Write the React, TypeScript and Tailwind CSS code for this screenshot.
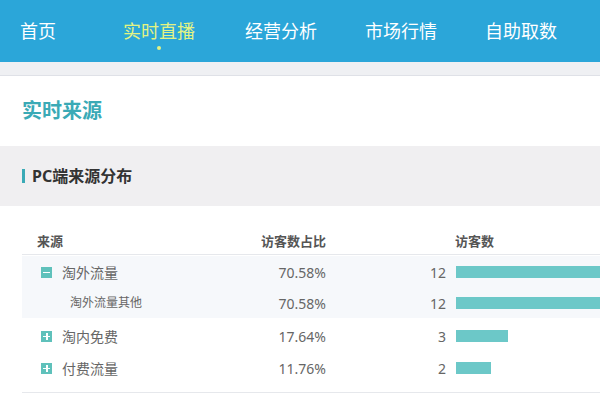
const navItems = ['首页', '实时直播', '经营分析', '市场行情', '自助取数']

type Row = { name: string; pct: string; count: number; level: 0 | 1; icon?: 'minus' | 'plus' }

const groups: Row[][] = [
  [
    { name: '淘外流量', pct: '70.58%', count: 12, level: 0, icon: 'minus' },
    { name: '淘外流量其他', pct: '70.58%', count: 12, level: 1 },
  ],
  [{ name: '淘内免费', pct: '17.64%', count: 3, level: 0, icon: 'plus' }],
  [{ name: '付费流量', pct: '11.76%', count: 2, level: 0, icon: 'plus' }],
]

function ToggleIcon({ kind }: { kind: 'minus' | 'plus' }) {
  return (
    <span className="relative w-[11px] h-[11px] bg-[#5fc1bb] shrink-0">
      <span className="absolute left-[2px] right-[2px] top-[5px] h-[1.5px] bg-white" />
      {kind === 'plus' && <span className="absolute top-[2px] bottom-[2px] left-[5px] w-[1.5px] bg-white" />}
    </span>
  )
}

function TableRow({ row }: { row: Row }) {
  const sub = row.level === 1
  return (
    <div className={`grid grid-cols-[234px_70px_120px_1fr] items-center ${sub ? 'h-[30px]' : 'h-[32px]'}`}>
      <div className="flex items-center gap-[10px] pl-[19px]">
        {row.icon ? <ToggleIcon kind={row.icon} /> : null}
        <span className={sub ? 'pl-[29px] text-[12px] text-[#666]' : 'text-[14px] text-[#666]'}>{row.name}</span>
      </div>
      <div className="text-right text-[14px] text-[#666]">{row.pct}</div>
      <div className="text-right text-[14px] text-[#666]">{row.count}</div>
      <div className="pl-[10px] flex items-center">
        <div className="h-[12px] bg-[#6cc8c8]" style={{ width: row.count * 17.4 }} />
      </div>
    </div>
  )
}

export default function App() {
  return (
    <div className="w-[600px] h-[400px] overflow-hidden bg-white font-['Noto_Sans','Noto_Sans_CJK_SC',sans-serif]">
      <nav className="h-[62px] bg-[#2ba6d9] flex items-center pl-[20px] gap-[48px]">
        {navItems.map((item, i) => (
          <div
            key={item}
            className={`relative text-[18px] ${i === 0 ? 'mr-[19px]' : ''} ${i === 1 ? 'mr-[2px] text-[#e3f383]' : 'text-white'}`}
          >
            {item}
            {i === 1 && <span className="absolute left-1/2 -translate-x-1/2 top-[28px] w-[4px] h-[4px] rounded-full bg-[#e3f383]" />}
          </div>
        ))}
      </nav>
      <div className="h-[14px] bg-[#eff0f3] border-b border-[#dfe1e7]" />

      <section className="h-[70px] flex items-center pl-[22px]">
        <h1 className="text-[20px] font-bold text-[#3aaab6]">实时来源</h1>
      </section>

      <section className="h-[60px] bg-[#f0eff1] flex items-center pl-[22px] gap-[7px]">
        <span className="w-[3px] h-[14px] bg-[#3aaab6]" />
        <h2 className="text-[16px] font-bold text-[#333]">PC端来源分布</h2>
      </section>

      <div className="ml-[22px] pt-[23px] w-[700px]">
        <div className="grid grid-cols-[234px_70px_120px_1fr] h-[26px] items-center border-b border-[#e6e8ec] text-[13px] font-semibold text-[#555]">
          <div className="pl-[15px]">来源</div>
          <div className="text-right">访客数占比</div>
          <div />
          <div className="pl-[9px]">访客数</div>
        </div>
        <div className="flex flex-col pt-[1px] pb-[8px] border-b border-[#e6e8ec]">
          {groups.map((g, gi) => (
            <div key={gi} className={gi === 0 ? 'bg-[#f6f8fb] mb-[2px]' : ''}>
              {g.map((r) => (
                <TableRow key={r.name} row={r} />
              ))}
            </div>
          ))}
        </div>
      </div>
    </div>
  )
}
